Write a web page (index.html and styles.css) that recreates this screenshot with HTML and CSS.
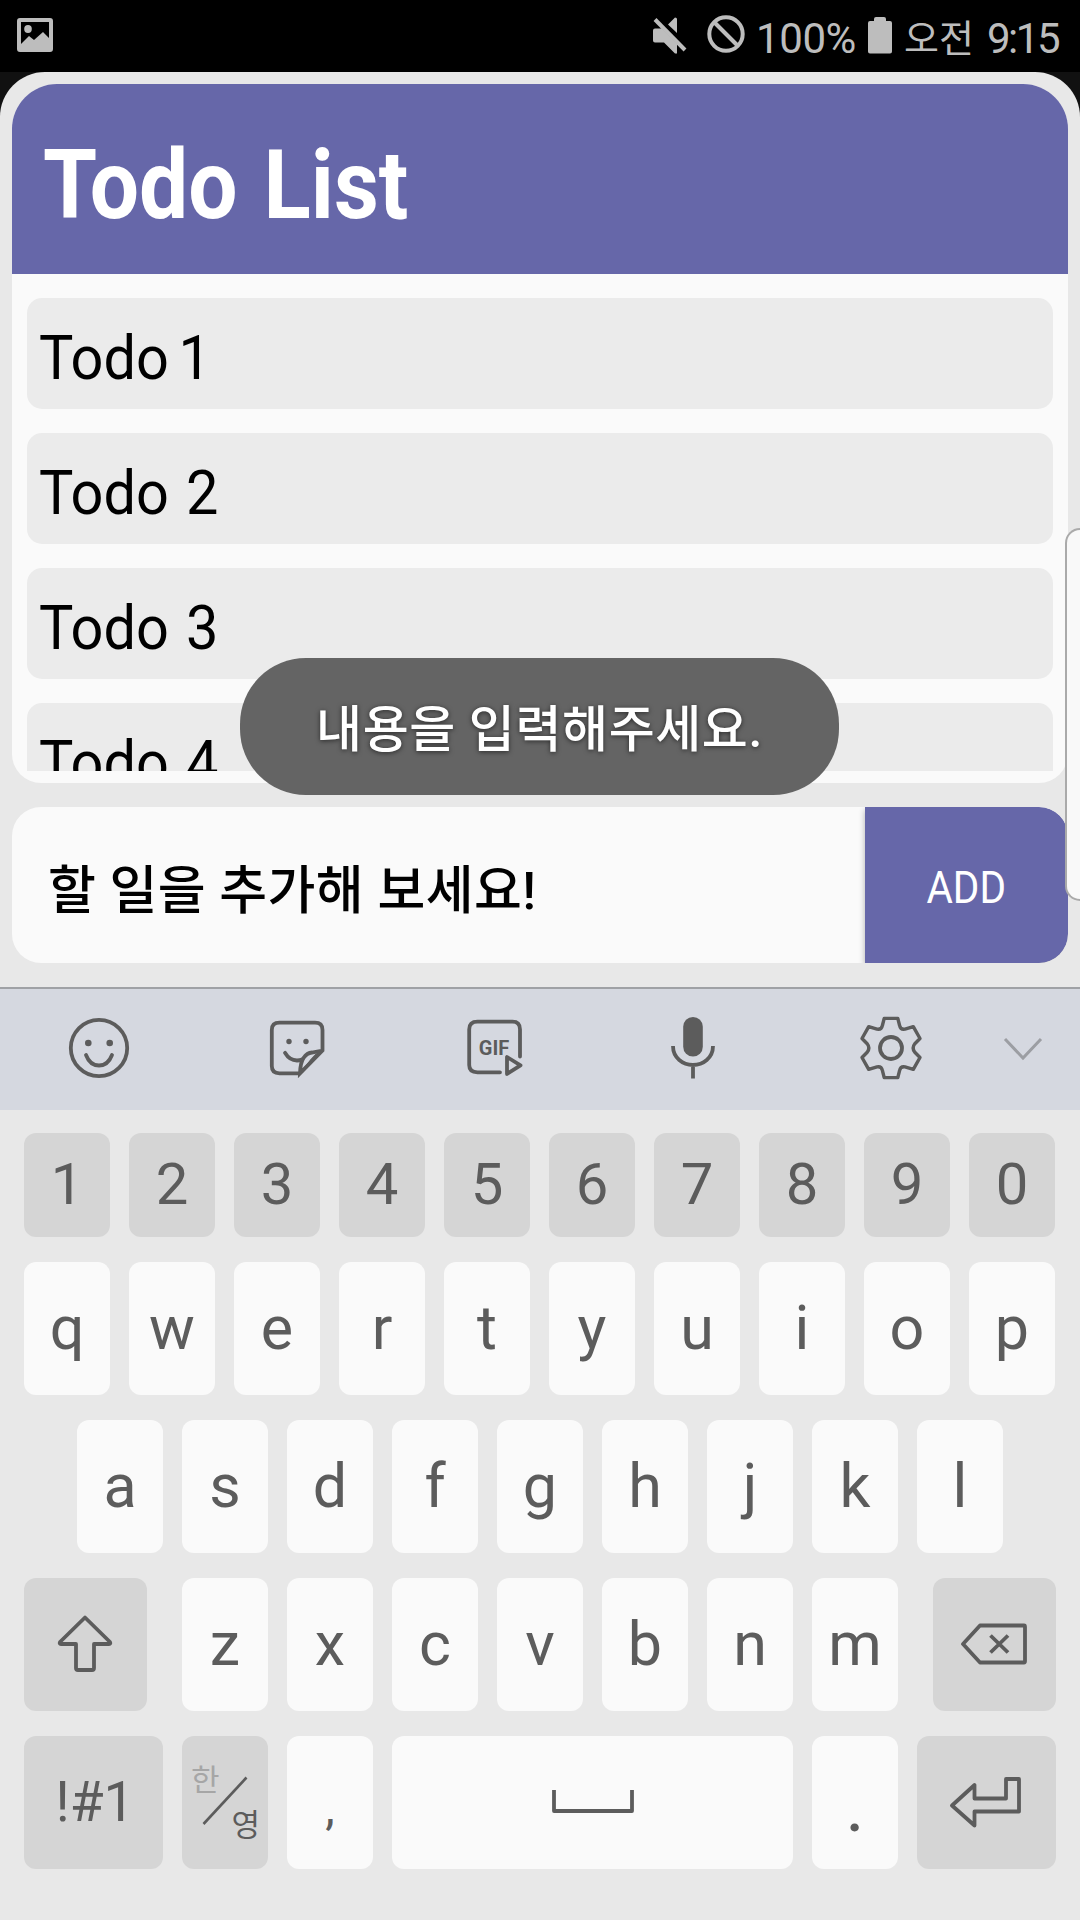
FILE: index.html
```html
<!DOCTYPE html>
<html lang="ko">
<head>
<meta charset="utf-8">
<title>Todo List</title>
<link rel="stylesheet" href="styles.css">
</head>
<body>
<div class="phone">
  <header class="status">
    <svg class="ic-picture" width="36" height="35" viewBox="0 0 36 35"><path fill-rule="evenodd" d="M3 0H33Q36 0 36 3V31Q36 34 33 34H3Q0 34 0 31V3Q0 0 3 0ZM4 4V26L12 18L17 22L26 14L32 20V4Z"/><ellipse cx="11" cy="11" rx="3.8" ry="4"/></svg>
    <svg class="ic-mute" width="34" height="37" viewBox="0 0 34 37"><path d="M2 11.5H9L24 27V36.500H22L11 25.500H2Q0 25.500 0 23.500V13.500Q0 11.500 2 11.500ZM15 7.500L22 .5Q24 .5 24 2V16Z"/><path class="slash" d="M2 2.500L32 33"/></svg>
    <svg class="ic-block" width="38" height="38" viewBox="0 0 38 38"><circle cx="19" cy="19" r="16.700"/><path d="M7.500 7.500L30.500 30.500"/></svg>
    <span class="battery-text">100%</span>
    <svg class="ic-battery" width="24" height="37" viewBox="0 0 24 37"><path d="M8 0H16Q18 0 18 2V4H22Q24 4 24 6V34.500Q24 36.500 22 36.500H2Q0 36.500 0 34.500V6Q0 4 2 4H6V2Q6 0 8 0Z"/></svg>
    <span class="meridiem">오전</span>
    <span class="clock">9:15</span>
  </header>

  <div class="stage">
    <main class="app">
      <section class="card">
        <h1 class="card-head"><span>Todo List</span></h1>
        <ul class="todos">
          <li class="todo"><span>Todo 1</span></li>
          <li class="todo"><span>Todo 2</span></li>
          <li class="todo"><span>Todo 3</span></li>
          <li class="todo"><span>Todo 4</span></li>
        </ul>
      </section>
      <form class="composer">
        <div class="field">할 일을 추가해 보세요!</div>
        <button class="add" type="button"><span>ADD</span></button>
      </form>
      <div class="toast">내용을 입력해주세요.</div>
      <div class="edge-handle"></div>
    </main>
  </div>

  <section class="keyboard">
    <nav class="tools">
      <svg class="tool" viewBox="-33 -33 66 66"><circle r="28.200"/><path class="round" d="M-13 7Q-9 17.500 0 17.500T13 7"/><g class="solid"><circle cx="-10.700" cy="-5" r="3.300"/><circle cx="10.700" cy="-5" r="3.300"/></g></svg>
      <svg class="tool" viewBox="-33 -33 66 66"><path d="M3 25.300H-17.500Q-25.200 25.300-25.200 18V-18Q-25.200-25.300-17.500-25.300H18Q25.500-25.300 25.500-18V2.500L3 25.300Q3.500 14 6.500 10Q10 4.800 15 4.500L25.500 2.500"/><path class="round" d="M-12 4.800Q-7.500 12.500 0 12.500Q3 12.500 5 11.500"/><path class="fine" d="M4.500 24Q12 16 14.500 12L20 6"/><g class="solid"><circle cx="-8" cy="-6.500" r="2.700"/><circle cx="9" cy="-6.500" r="2.700"/></g></svg>
      <svg class="tool" viewBox="-33 -33 66 66"><path class="round" d="M5 24.300H-17.500Q-25.800 24.300-25.800 17V-18.500Q-25.800-26.300-17.500-26.300H17.500Q25-26.300 25-18.500V8.500"/><path class="round" d="M12 9V26L25.500 17.300Z"/><text x="-1" y="6.500">GIF</text></svg>
      <svg class="tool" viewBox="-33 -33 66 66"><rect class="solid" x="-9.800" y="-31" width="19.600" height="39.500" rx="9.800"/><path d="M-20-2C-20 10-10 17 0 17S20 10 20-2M0 17V30.500"/></svg>
      <svg class="tool" viewBox="-33 -33 66 66"><circle r="11"/><path class="gear" d="M-6.800-29.600H6.800L8.600-22.500Q9.500-18 14-18.800L22.300-21.300L29-9.500L23.800-4.200Q20.500 0 23.800 4.200L29 9.500L22.300 21.300L14 18.800Q9.500 18 8.600 22.500L6.800 29.600H-6.800L-8.600 22.500Q-9.500 18-14 18.800L-22.300 21.300L-29 9.500L-23.800 4.200Q-20.500 0-23.800-4.200L-29-9.500L-22.300-21.300L-14-18.800Q-9.500-18-8.600-22.500Z"/></svg>
      <svg class="collapse" viewBox="-33 -33 66 66"><path d="M-18-9L0 10L18-9"/></svg>
    </nav>
    <div class="keys">
      <div class="row numbers"><b>1</b><b>2</b><b>3</b><b>4</b><b>5</b><b>6</b><b>7</b><b>8</b><b>9</b><b>0</b></div>
      <div class="row"><b>q</b><b>w</b><b>e</b><b>r</b><b>t</b><b>y</b><b>u</b><b>i</b><b>o</b><b>p</b></div>
      <div class="row home"><b>a</b><b>s</b><b>d</b><b>f</b><b>g</b><b>h</b><b>j</b><b>k</b><b>l</b></div>
      <div class="row spread">
        <b class="mod shift"><svg width="60" height="60" viewBox="-30 -30 60 60"><path d="M0-26.500L25-2Q26 0 24 0H9V24Q9 26 7 26H-7Q-9 26-9 24V0H-24Q-26 0-25-2Z"/></svg></b>
        <div class="row"><b>z</b><b>x</b><b>c</b><b>v</b><b>b</b><b>n</b><b>m</b></div>
        <b class="mod erase"><svg width="72" height="48" viewBox="-36 -24 72 48"><path d="M-31 0L-14-18.500H30Q31-18.500 31-17V17Q31 18.500 30 18.500H-14Z"/><path d="M-3.500-8.500L14 8.500M14-8.500L-3.500 8.500"/></svg></b>
      </div>
      <div class="row">
        <b class="mod symbols">!#1</b>
        <b class="mod lang"><span class="ko">한</span><svg width="46" height="50" viewBox="0 0 46 50"><path d="M1.500 48L44.500 1.500"/></svg><span class="en">영</span></b>
        <b class="comma">,</b>
        <b class="space"><svg width="82" height="26" viewBox="0 0 82 26"><path d="M2 1V22H80V1"/></svg></b>
        <b class="period">.</b>
        <b class="mod enter"><svg width="76" height="56" viewBox="-38 -28 76 56"><path d="M-34 3.500L-11.500-17V-3.500H20V-23H33V9.500H-11.500V23.500Z"/></svg></b>
      </div>
    </div>
  </section>
</div>
</body>
</html>
```

FILE: styles.css
```css
* { box-sizing: border-box; }

body {
  margin: 0;
  background: #e8e8e8;
  font-family: Roboto, "Noto Sans CJK KR", sans-serif;
}

.phone {
  width: 1080px;
  height: 1920px;
  overflow: hidden;
  display: flex;
  flex-direction: column;
}

/* status bar */
.status {
  height: 72px;
  flex: none;
  display: flex;
  align-items: flex-start;
  padding: 0 21px 0 17px;
  background: #000;
  color: #bdbdbd;
  fill: #bdbdbd;
  font-size: 42px;
  line-height: 50px;
  white-space: nowrap;
}
.ic-picture { margin-top: 18px; }
.ic-mute { margin: 17px 20px 0 auto; }
.ic-mute .slash { stroke: #bdbdbd; stroke-width: 4; }
.ic-block { margin: 15px 11px 0 0; fill: none; stroke: #bdbdbd; stroke-width: 4; }
.battery-text { width: 112px; padding-top: 14px; letter-spacing: -0.4px; }
.ic-battery { margin-top: 17px; }
.meridiem {
  width: 83px;
  padding: 14px 0 0 12px;
  font-size: 38px;
}
.clock { width: 72px; padding-top: 14px; margin-left: 12px; letter-spacing: -2.5px; }

/* application */
.stage { height: 915px; flex: none; background: #111; }
.app {
  position: relative;
  height: 915px;
  padding: 12px;
  display: flex;
  flex-direction: column;
  gap: 24px;
  background: #e8e8e8;
  border-radius: 45px 45px 0 0;
}
.card {
  height: 699px;
  overflow: hidden;
  display: flex;
  flex-direction: column;
  padding-bottom: 12px;
  background: #fafafa;
  border-radius: 45px 45px 29px 29px;
}
.card-head {
  height: 190px;
  flex: none;
  margin: 0;
  padding: 44px 0 0 31px;
  background: #6667a9;
  color: #fff;
  font-size: 97px;
  line-height: 114px;
  font-weight: 700;
}
.card-head span, .todo span, .add span { display: inline-block; transform-origin: left; }
.card-head span { transform: scaleX(0.9); word-spacing: 5px; }

.todos {
  flex: 1;
  min-height: 0;
  overflow: hidden;
  margin: 0;
  padding: 24px 15px 0;
  list-style: none;
  display: flex;
  flex-direction: column;
  gap: 24px;
}
.todo {
  height: 111px;
  flex: none;
  padding: 24px 0 0 12px;
  background: #ebebeb;
  border-radius: 15px;
  color: #000;
  font-size: 61px;
  line-height: 72px;
}
.todo span { transform: scaleX(0.945); word-spacing: 3px; }
.todo:first-child span { word-spacing: -5px; }

.composer {
  height: 156px;
  margin: 0;
  display: flex;
  overflow: hidden;
  background: #fafafa;
  border-radius: 29px;
}
.field {
  flex: 1;
  padding: 5px 0 0 36px;
  font-size: 52px;
  font-weight: 500;
  line-height: 160px;
  letter-spacing: 0.4px;
  color: #000;
}
.add {
  width: 203px;
  padding: 6px 0 0;
  border: 0;
  border-radius: 0 29px 29px 0;
  background: #6667a9;
  box-shadow: 0 3px 6px rgba(0, 0, 0, 0.3);
  color: #fff;
  font: 400 44px/52px Roboto, sans-serif;
}
.add span { transform: scaleX(0.92); transform-origin: center; }

.toast {
  position: absolute;
  left: 240px;
  top: 586px;
  width: 599px;
  height: 137px;
  padding-top: 4px;
  border-radius: 66px;
  background: rgba(95, 95, 95, 0.97);
  color: #fff;
  font-size: 50px;
  font-weight: 500;
  line-height: 137px;
  letter-spacing: 0.6px;
  text-align: center;
  text-shadow: 0 1px 5px rgba(0, 0, 0, 0.6);
}
.edge-handle {
  position: absolute;
  left: 1065px;
  top: 456px;
  width: 15px;
  height: 373px;
  border: 2px solid rgba(150, 150, 150, 0.8);
  border-right: 0;
  border-radius: 17px 0 0 17px;
  background: #f9f9f9;
}

/* keyboard */
.keyboard { flex: 1; background: #e8e8e8; }
.tools {
  height: 123px;
  padding-bottom: 3px;
  display: flex;
  align-items: center;
  background: #d5d8e0;
  border-top: 2px solid #9fa1a5;
}
.tool { width: 66px; height: 66px; margin: 0 66px; }
.tool, .collapse, .keys svg { fill: none; stroke: #5c5c5c; stroke-width: 3.8; }
.tool .round { stroke-linecap: round; stroke-linejoin: round; }
.tool .fine { stroke-width: 2.5; }
.tool .solid { fill: #5c5c5c; stroke: none; }
.tool .gear { stroke-width: 3.4; stroke-linejoin: round; }
.tool text {
  fill: #5c5c5c;
  stroke: none;
  font-size: 20px;
  font-weight: 700;
  text-anchor: middle;
}
.collapse { width: 66px; height: 66px; stroke: #9c9ea3; stroke-width: 3; }

.keys {
  padding: 23px 24px 0;
  display: flex;
  flex-direction: column;
  gap: 25px;
}
.row { display: flex; gap: 19px; }
.row.home { justify-content: center; }
.row.spread { justify-content: space-between; }
.row b {
  width: 86px;
  height: 133px;
  flex: none;
  display: flex;
  justify-content: center;
  align-items: center;
  padding-bottom: 2px;
  border-radius: 12px;
  background: #fafafa;
  color: #5c5c5c;
  font-size: 61px;
  font-weight: 400;
  line-height: 72px;
}
.row.numbers b { height: 104px; background: #d5d5d5; font-size: 58px; }
.row b.mod { background: #d5d5d5; }
.row b.shift, .row b.erase { width: 123px; padding-right: 2px; }
.row b.symbols, .row b.enter { width: 139px; font-size: 55px; }
.row b.symbols { padding-left: 3px; }
.row b.enter { padding-right: 1px; }
.row b.space { width: 401px; }
.keys svg { stroke-linejoin: round; }
.row b.comma { font-size: 48px; padding-top: 12px; }
.row b.period { font-size: 74px; padding-top: 8px; }

.row b.lang {
  display: grid;
  grid-template: 1fr / 1fr;
  padding: 0;
  font-size: 31px;
  line-height: 34px;
}
.lang > * { grid-area: 1 / 1; }
.lang svg { place-self: center; stroke-width: 2.6; margin-bottom: 3px; }
.lang .ko { place-self: start; padding: 28px 0 0 9px; color: #a6a6a6; }
.lang .en { place-self: end; padding: 0 8px 26px 0; }
```
